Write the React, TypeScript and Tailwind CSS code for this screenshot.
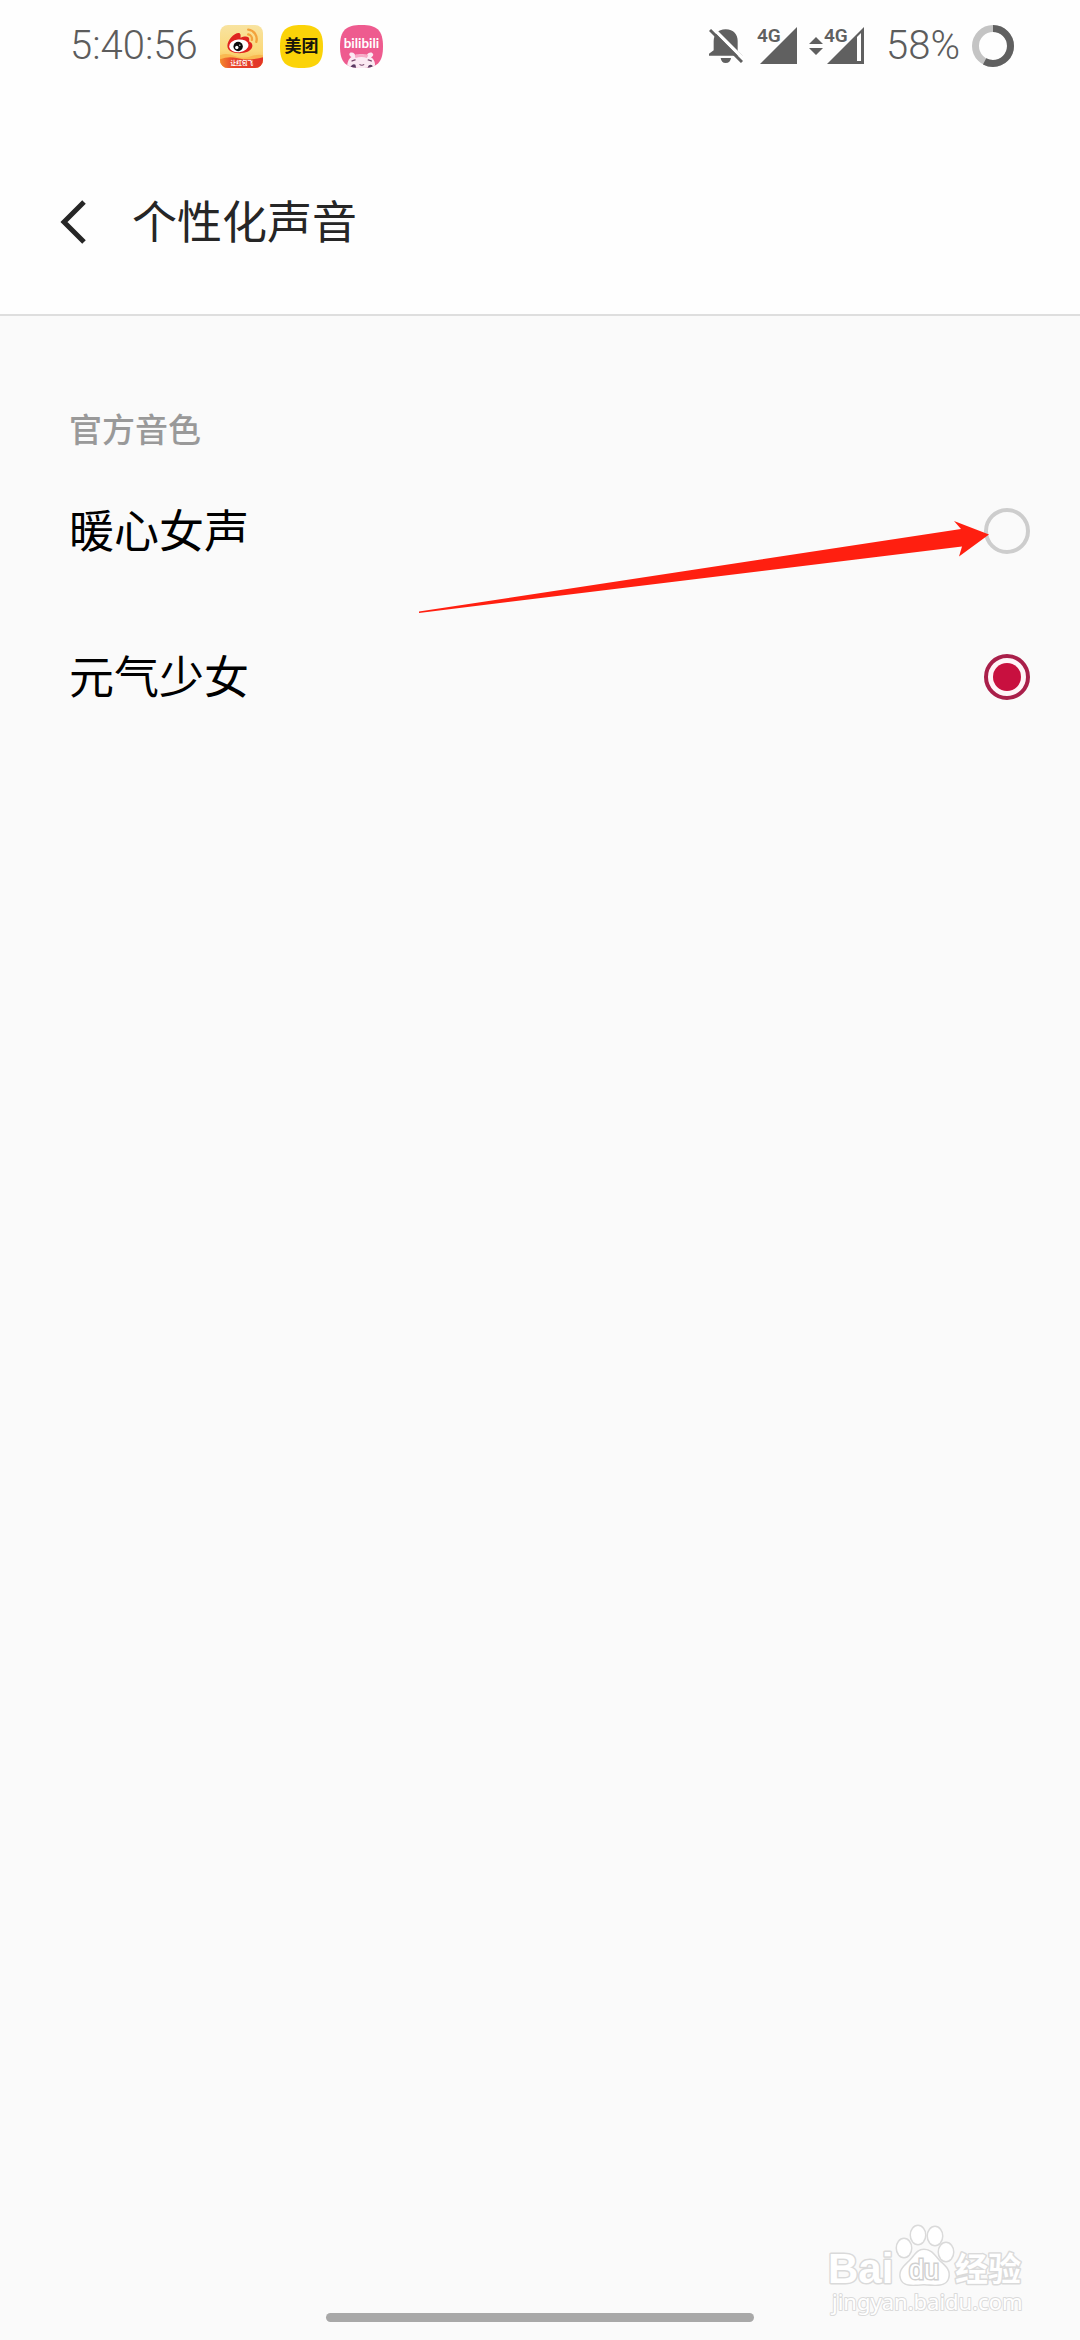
import { useState } from "react";

function WeiboIcon() {
  return (
    <svg viewBox="0 0 128 128" className="size-[43px] rounded-lg" role="img" aria-label="微博">
      <defs>
        <linearGradient id="weibo-bg" x1="0" y1="0" x2="0" y2="1">
          <stop offset="0" stopColor="#f8e3a0" />
          <stop offset="0.6" stopColor="#fbd97a" />
          <stop offset="1" stopColor="#f7b04a" />
        </linearGradient>
        <linearGradient id="weibo-banner" x1="0" y1="0" x2="1" y2="0">
          <stop offset="0" stopColor="#f48a2c" />
          <stop offset="0.3" stopColor="#e8452b" />
          <stop offset="1" stopColor="#e23327" />
        </linearGradient>
      </defs>
      <rect width="128" height="128" fill="url(#weibo-bg)" />
      <path d="M0 90 Q20 82 44 92 T90 94 T128 90 V128 H0Z" fill="#f9b850" />
      <path d="M0 102 Q24 92 50 98 T96 102 T128 96 V128 H0Z" fill="url(#weibo-banner)" />
      <path d="M22 62 C22 46 42 24 55 24 C62 24 62 32 61 38 C72 32 88 32 87 42 C87 46 86 48 88 50 C104 56 99 84 58 84 C36 84 22 76 22 62Z" fill="#df2420" />
      <ellipse cx="56" cy="62" rx="29" ry="19" fill="#fff" transform="rotate(-6 56 62)" />
      <circle cx="54" cy="64" r="14" fill="#0b0b0b" />
      <circle cx="50" cy="67" r="5" fill="#fff" />
      <circle cx="59" cy="60" r="2" fill="#fff" />
      <path d="M84 14 A28 28 0 0 1 108 50 M84 28 A14 14 0 0 1 95 44" fill="none" stroke="#f3a23c" strokeWidth="7" strokeLinecap="round" />
      <text x="65" y="120" textAnchor="middle" fontSize="17" fontWeight="700" fill="#fff" fontFamily="'Noto Sans CJK SC', sans-serif">让红包飞</text>
    </svg>
  );
}

function MeituanIcon() {
  return (
    <svg viewBox="0 0 43 43" className="size-[43px]" role="img" aria-label="美团">
      <path d="M21.500 0 C37 0 43 5 43 21.500 C43 38 37 43 21.500 43 C6 43 0 38 0 21.500 C0 5 6 0 21.500 0Z" fill="#fbd308" />
      <text x="21.500" y="27" textAnchor="middle" fontSize="17" fontWeight="700" fill="#17150c" fontFamily="'Noto Sans CJK SC', sans-serif">美团</text>
    </svg>
  );
}

function BilibiliIcon() {
  return (
    <svg viewBox="0 0 128 128" className="size-[43px]" role="img" aria-label="哔哩哔哩">
      <defs>
        <clipPath id="bili-shape">
          <path d="M64 0 C110 0 128 15 128 64 C128 113 110 128 64 128 C18 128 0 113 0 64 C0 15 18 0 64 0Z" />
        </clipPath>
      </defs>
      <g clipPath="url(#bili-shape)">
        <rect width="128" height="128" fill="#ee5b8f" />
        <text x="64" y="68" textAnchor="middle" fontSize="40" fontWeight="700" fill="#fff" fontFamily="Lato, sans-serif">bilibili</text>
        <path d="M22 128 C20 112 26 100 34 95 C26 92 26 84 32 82 C40 80 44 86 46 90 Q64 84 80 90 C82 84 90 80 96 83 C102 88 98 93 92 96 C102 102 106 114 104 128Z" fill="#fbeaf3" />
        <path d="M44 90 Q50 84 56 90 Q64 84 70 90 Q76 84 84 91 L80 98 Q64 92 46 98Z" fill="#f7a9c6" />
        <path d="M36 107 l9 -3 M84 104 l9 3" stroke="#7a4a6e" strokeWidth="4" strokeLinecap="round" />
        <path d="M30 128 q6 -14 16 -10 l2 10Z M82 128 q4 -14 14 -8 l2 8Z" fill="#5a3b63" />
        <path d="M58 117 q7 5 14 0" fill="none" stroke="#7a4a6e" strokeWidth="3" />
      </g>
    </svg>
  );
}

function BellOffIcon() {
  return (
    <svg viewBox="0 0 102 102" className="size-[34px]" role="img" aria-label="静音">
      <path d="M50 1 C74 1 86 18 86 36 V66 L101 80 H0 V74 L14 64 V36 C14 18 26 1 50 1Z" fill="#606060" />
      <path d="M35 87 H66 Q64 102 50 102 Q37 102 35 87Z" fill="#606060" />
      <path d="M8 -6 L112 98" stroke="#fff" strokeWidth="10" />
      <path d="M3 3 L99 99" stroke="#606060" strokeWidth="9" />
    </svg>
  );
}

function SignalIcon({ weak = false }: { weak?: boolean }) {
  return (
    <svg viewBox="0 0 42 46" className="h-[46px] w-[42px]" role="img" aria-label="4G 信号">
      <path d="M3 41 L40 4 V41Z" fill="#606060" />
      {weak && <path d="M33 14 L37 10 V38 H33Z" fill="#fff" />}
      <text x="0" y="19" fontSize="19" fontWeight="600" fill="#606060" fontFamily="Roboto, sans-serif">4G</text>
    </svg>
  );
}

function BatteryRing() {
  return (
    <svg viewBox="0 0 42 42" className="size-[42px]" role="img" aria-label="电量">
      <circle cx="21" cy="21" r="17.500" fill="none" stroke="#c4c4c4" strokeWidth="7" />
      <circle cx="21" cy="21" r="17.500" fill="none" stroke="#606060" strokeWidth="7" pathLength="100" strokeDasharray="58 42" transform="rotate(-90 21 21)" />
    </svg>
  );
}

function StatusBar() {
  return (
    <div className="flex h-[92px] items-center justify-between pr-[66px] pl-[70px] font-['Roboto'] text-[40px] font-light text-[#5c5c5c]">
      <div className="flex items-center gap-[17px]">
        <span className="mr-[5px]">5:40:56</span>
        <WeiboIcon />
        <MeituanIcon />
        <BilibiliIcon />
      </div>
      <div className="flex items-center">
        <BellOffIcon />
        <div className="ml-[14px] flex">
          <SignalIcon />
        </div>
        <svg viewBox="0 0 14 18" className="ml-[10px] h-[18px] w-[14px]" aria-hidden="true">
          <path d="M7 0 L14 7 H0Z M0 11 H14 L7 18Z" fill="#606060" />
        </svg>
        <div className="ml-px flex">
          <SignalIcon weak />
        </div>
        <span className="mr-3 ml-5">58%</span>
        <BatteryRing />
      </div>
    </div>
  );
}

function PointerArrow() {
  return (
    <svg viewBox="0 0 570 92" className="pointer-events-none absolute top-[63px] right-[91px] z-10 h-[92px] w-[570px]" aria-hidden="true">
      <path d="M0 90.500 L542 8 L535 0 L570 13.500 L540 35.500 L543 25.500 L0 92Z" fill="#ff1f10" />
    </svg>
  );
}

function Watermark() {
  return (
    <svg viewBox="0 0 200 100" className="h-[100px] w-[200px]" role="img" aria-label="Baidu 经验 jingyan.baidu.com">
      <g fill="#fff" stroke="#dadada" strokeWidth="3" paintOrder="stroke" strokeLinejoin="round">
        <text x="0" y="61" fontSize="42" fontWeight="700" fontFamily="'Liberation Sans', sans-serif">Bai</text>
        <ellipse cx="76" cy="26" rx="7" ry="9" />
        <ellipse cx="90" cy="13" rx="7" ry="9" />
        <ellipse cx="107" cy="14" rx="7" ry="9" />
        <ellipse cx="118" cy="30" rx="7" ry="9" />
        <path d="M96 28 C104 28 107 35 112 40 C118 45 122 49 120 56 C118 64 108 63 96 62 C84 63 75 64 73 56 C71 48 77 44 82 39 C87 34 89 28 96 28Z" />
        <text x="127" y="59" fontSize="33" fontWeight="700" fontFamily="'Noto Sans CJK SC', sans-serif">经验</text>
        <text x="4" y="88" fontSize="22" strokeWidth="2" fontFamily="'Noto Sans', sans-serif">jingyan.baidu.com</text>
      </g>
      <text x="96" y="57" textAnchor="middle" fontSize="27" fill="#fff" stroke="#d0d0d0" strokeWidth="3" paintOrder="stroke" fontFamily="'Liberation Sans', sans-serif">du</text>
    </svg>
  );
}

const voices = ["暖心女声", "元气少女"];

export default function App() {
  const [selected, setSelected] = useState("元气少女");
  return (
    <div className="flex min-h-screen flex-col bg-[#fafafa] font-['Noto_Sans_CJK_SC',sans-serif]">
      <div className="border-b-2 border-[#dedede] bg-[#fefefe]">
        <StatusBar />
        <header className="flex items-center pt-[98px] pb-[60px] pl-[60px]">
          <button type="button" aria-label="返回" className="flex">
            <svg viewBox="0 0 26 44" className="h-[44px] w-[26px]" fill="none" stroke="#262626" strokeWidth="5">
              <path d="M24 2 L4 22 L24 42" />
            </svg>
          </button>
          <h1 className="ml-[46px] pb-1 text-[45px] leading-[60px] text-[#262626]">个性化声音</h1>
        </header>
      </div>

      <main className="flex-1 pt-[90px]">
        <fieldset>
          <legend className="mb-2 pl-[69px] text-[33px] leading-[44px] font-medium text-[#999999]">官方音色</legend>
          <div className="relative">
            {voices.map((voice) => (
              <label key={voice} className="flex h-[146px] items-center justify-between pr-[50px] pl-[69px] text-[45px] leading-[60px] text-black">
                <span className="pb-1">{voice}</span>
                <input
                  type="radio"
                  name="voice"
                  checked={selected === voice}
                  onChange={() => setSelected(voice)}
                  className="grid size-[46px] appearance-none place-items-center rounded-full border-4 border-[#cdcdcd] before:size-7 before:rounded-full checked:border-[#a91f4a] checked:bg-[#fff4f8] checked:before:bg-[#c8103f]"
                />
              </label>
            ))}
            <PointerArrow />
          </div>
        </fieldset>
      </main>

      <footer className="relative flex justify-end pr-[52px] pb-[18px]">
        <Watermark />
        <div className="absolute inset-x-0 bottom-[18px] mx-auto h-[9px] w-[428px] rounded-full bg-[#a8a8a8]" />
      </footer>
    </div>
  );
}
